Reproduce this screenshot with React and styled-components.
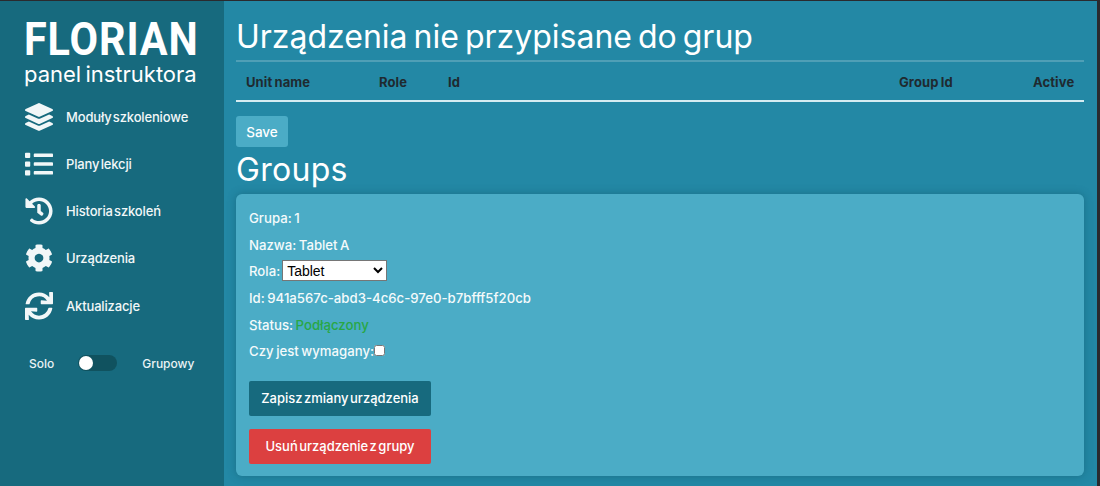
import React from 'react';
import styled, { createGlobalStyle } from 'styled-components';
import { FaLayerGroup, FaList, FaHistory, FaCog, FaSync } from 'react-icons/fa';

const GlobalStyle = createGlobalStyle`
    html, body {
        margin: 0;
        height: 100%;
        overflow: hidden;
        background: #2a2a2e;
    }
    body {
        font-family: "Inter", "Noto Sans", sans-serif;
        color: #fff;
    }
`;

const Page = styled.div`
    display: flex;
    height: 485px;
    width: 1097px;
    margin-top: 1px;
`;

const Sidebar = styled.aside`
    width: 224px;
    flex-shrink: 0;
    background: #176a7e;
    display: flex;
    flex-direction: column;
`;

const Logo = styled.div`
    margin: 18px 0 0 24px;
    width: 174px;
`;

const LogoTitle = styled.div`
    font-family: "Roboto", sans-serif;
    font-weight: 700;
    font-size: 46px;
    line-height: 40px;
    letter-spacing: 1px;
    white-space: nowrap;
    transform: scaleX(0.9);
    transform-origin: left center;
`;

const LogoSub = styled.div`
    font-size: 22px;
    line-height: 26px;
    margin-top: 2px;
    word-spacing: -2px;
    white-space: nowrap;
`;

const Nav = styled.nav`
    display: flex;
    flex-direction: column;
    margin-top: 6px;
`;

const NavItem = styled.a`
    display: flex;
    align-items: center;
    height: 47.25px;
    padding-left: 25px;
    font-size: 13px;
    font-weight: 500;
    letter-spacing: -0.15px;
    word-spacing: -2px;
    color: #f2f7f8;
    svg {
        width: 28px;
        height: 28px;
        margin-right: 13px;
        flex-shrink: 0;
    }
`;

const ModeRow = styled.div`
    display: flex;
    align-items: center;
    margin-top: 26px;
    padding-left: 29px;
    font-size: 12px;
    font-weight: 500;
    color: #eaf3f5;
`;

const Track = styled.div`
    position: relative;
    width: 39px;
    height: 16px;
    border-radius: 8px;
    background: #10525f;
    margin: 0 25px 0 24px;
`;

const Knob = styled.div`
    position: absolute;
    left: 1px;
    top: 1px;
    width: 14px;
    height: 14px;
    border-radius: 50%;
    background: #fff;
`;

const Main = styled.main`
    flex: 1;
    background: #2388a5;
    padding: 0 13px 0 12px;
    overflow: hidden;
`;

const Title = styled.h1`
    margin: 0;
    padding-top: 12px;
    font-size: 32px;
    line-height: 47px;
    font-weight: 400;
    word-spacing: -3px;
    color: #fff;
    white-space: nowrap;
`;

const UnitsTable = styled.table`
    width: 848px;
    table-layout: fixed;
    border-collapse: collapse;
    border-top: 2px solid #4f9fb6;
    border-bottom: 2px solid #d5ecf2;
`;

const HeadCell = styled.th`
    width: ${props => props.w}px;
    height: 40px;
    padding: 2px 10px 0;
    box-sizing: border-box;
    text-align: left;
    font-size: 13px;
    font-weight: 700;
    letter-spacing: 0.1px;
    word-spacing: -1px;
    color: #1f2a30;
    white-space: nowrap;
`;

const SaveButton = styled.button`
    display: block;
    margin-top: 14px;
    width: 52px;
    height: 31px;
    padding: 0;
    border: 0;
    border-radius: 3px;
    background: #4bacc6;
    color: #fff;
    font-family: inherit;
    font-size: 13.5px;
    font-weight: 500;
`;

const SubTitle = styled.h2`
    margin: 3px 0 4px;
    font-size: 32px;
    line-height: 40px;
    font-weight: 400;
    letter-spacing: 0.3px;
    color: #fff;
`;

const Card = styled.section`
    height: 282px;
    box-sizing: border-box;
    padding: 11px 13px;
    border-radius: 6px;
    background: #4bacc6;
    box-shadow: 0 0 8px rgba(15, 80, 100, 0.45);
`;

const Field = styled.div`
    display: flex;
    align-items: center;
    height: 26.6px;
    font-size: 13.2px;
    font-weight: 500;
    word-spacing: -1px;
    color: #f4fafb;
    white-space: pre;
`;

const RoleSelect = styled.select`
    width: 105px;
    height: 21px;
    margin: 0 0 1px 2px;
    font-family: "Liberation Sans", sans-serif;
    font-size: 14px;
    background: #fff;
    color: #000;
    border: 1px solid #767676;
    padding: 0;
`;

const StatusText = styled.span`
    color: #28a745;
`;

const Check = styled.input`
    width: 11px;
    height: 11px;
    margin: 0 0 2px 0;
`;

const Actions = styled.div`
    display: flex;
    flex-direction: column;
    align-items: flex-start;
    gap: 13px;
    margin-top: 16px;
`;

const ActionButton = styled.button`
    width: 182px;
    height: 35px;
    padding: 0;
    border: 0;
    border-radius: 2px;
    background: ${props => props.danger ? '#dc4040' : '#176a7e'};
    color: #fff;
    font-family: inherit;
    font-size: 13px;
    font-weight: 500;
    word-spacing: -2px;
`;

const navItems = [
    { icon: <FaLayerGroup />, label: 'Moduły szkoleniowe' },
    { icon: <FaList />, label: 'Plany lekcji' },
    { icon: <FaHistory />, label: 'Historia szkoleń' },
    { icon: <FaCog />, label: 'Urządzenia' },
    { icon: <FaSync />, label: 'Aktualizacje' },
];

const columns = [
    { label: 'Unit name', w: 133 },
    { label: 'Role', w: 69 },
    { label: 'Id', w: 451 },
    { label: 'Group Id', w: 134 },
    { label: 'Active', w: 61 },
];

const App = () => {
    return (
        <Page>
            <GlobalStyle />
            <Sidebar>
                <Logo>
                    <LogoTitle>FLORIAN</LogoTitle>
                    <LogoSub>panel instruktora</LogoSub>
                </Logo>
                <Nav>
                    {navItems.map(item => (
                        <NavItem key={item.label}>{item.icon}{item.label}</NavItem>
                    ))}
                </Nav>
                <ModeRow>
                    Solo
                    <Track><Knob /></Track>
                    Grupowy
                </ModeRow>
            </Sidebar>
            <Main>
                <Title>Urządzenia nie przypisane do grup</Title>
                <UnitsTable>
                    <thead>
                        <tr>
                            {columns.map(col => (
                                <HeadCell key={col.label} w={col.w}>{col.label}</HeadCell>
                            ))}
                        </tr>
                    </thead>
                </UnitsTable>
                <SaveButton>Save</SaveButton>
                <SubTitle>Groups</SubTitle>
                <Card>
                    <Field>Grupa: 1</Field>
                    <Field>Nazwa: Tablet A</Field>
                    <Field>
                        Rola:
                        <RoleSelect defaultValue="Tablet">
                            <option>Tablet</option>
                        </RoleSelect>
                    </Field>
                    <Field>Id: 941a567c-abd3-4c6c-97e0-b7bfff5f20cb</Field>
                    <Field>Status: <StatusText>Podłączony</StatusText></Field>
                    <Field>Czy jest wymagany:<Check type="checkbox" /></Field>
                    <Actions>
                        <ActionButton>Zapisz zmiany urządzenia</ActionButton>
                        <ActionButton danger>Usuń urządzenie z grupy</ActionButton>
                    </Actions>
                </Card>
            </Main>
        </Page>
    );
};

export default App;
